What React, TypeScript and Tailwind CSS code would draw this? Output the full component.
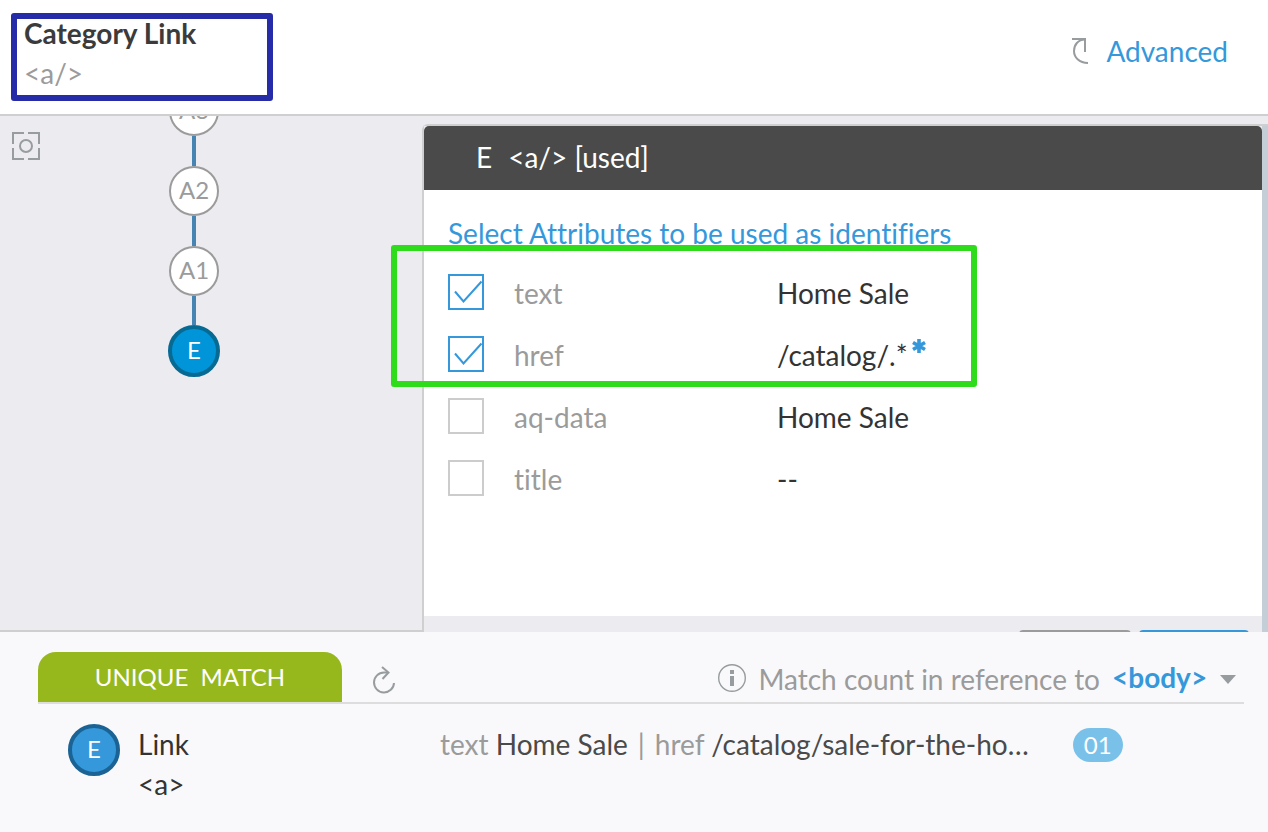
import { useState } from 'react';
import { clsx } from 'clsx';

interface Attribute {
  name: string;
  value: string;
  used: boolean;
  wildcard?: boolean;
}

const initialAttributes: Attribute[] = [
  { name: 'text', value: 'Home Sale', used: true },
  { name: 'href', value: '/catalog/.*', used: true, wildcard: true },
  { name: 'aq-data', value: 'Home Sale', used: false },
  { name: 'title', value: '--', used: false },
];

const ancestors = ['A3', 'A2', 'A1'];

function ElementHeader() {
  return (
    <header className="flex shrink-0 items-start justify-between border-b-2 border-[#cfcfcf] bg-white py-[13px] pr-10 pl-[11px]">
      <div className="w-[262px] rounded-[3px] border-6 border-[#262ca8] pb-2 pl-[7px]">
        <h1 className="leading-7 font-bold text-[#3b3b3b]">Category Link</h1>
        <p className="mt-3 leading-7 text-[#9b9b9b]">&lt;a/&gt;</p>
      </div>
      <button type="button" className="mt-[18px] flex gap-4 leading-10 text-[#3498db]">
        <svg className="mt-1.5 h-7 w-[18px] text-[#979c9f]" viewBox="0 0 18 28" fill="none" stroke="currentColor" strokeWidth="2">
          <path d="M0 2h14M13 1v14" />
          <path d="M13 2.5C6 2.5 2 8 2 14s5 12 14 12" />
        </svg>
        Advanced
      </button>
    </header>
  );
}

function AncestorTree() {
  return (
    <aside className="flex w-[422px] shrink-0 items-start overflow-hidden border-b-2 border-[#cfcfcf] pl-3">
      <button type="button" aria-label="Center on element" className="mt-4 text-[#979c9f]">
        <svg className="size-7" viewBox="0 0 28 28" fill="none" stroke="currentColor" strokeWidth="2">
          <path d="M12 1H1v11M16 1h11v11M12 27H1V16M16 27h11V16" />
          <circle cx="14" cy="14" r="6" />
        </svg>
      </button>
      <div className="-mt-[30px] ml-32 flex flex-col items-center text-2xl">
        {ancestors.map((label, index) => (
          <div key={label} className="flex flex-col items-center">
            <button
              type="button"
              className="size-[50px] rounded-full border-2 border-[#9b9b9b] bg-white pb-0.5 text-[#9b9b9b]"
            >
              {label}
            </button>
            <span className={clsx('w-1 bg-[#4684b4]', index === ancestors.length - 1 ? 'h-[29px]' : 'h-[30px]')} />
          </div>
        ))}
        <button type="button" className="size-[52px] rounded-full border-4 border-[#066a93] bg-[#0095d9] pb-0.5 text-white">
          E
        </button>
      </div>
    </aside>
  );
}

function AttributePanel() {
  const [attributes, setAttributes] = useState(initialAttributes);

  const toggle = (name: string) =>
    setAttributes((items) => items.map((item) => (item.name === name ? { ...item, used: !item.used } : item)));

  return (
    <section className="mt-2 flex min-w-0 flex-1 flex-col rounded-tl-md border-t-2 border-l-2 border-[#cfcfcf]">
      <div className="flex min-h-0 flex-1 bg-[#c3ced6]">
        <div className="flex min-w-0 flex-1 flex-col bg-white">
          <div className="bg-[#ecebf0]">
            <h2 className="flex gap-4 rounded-t-[5px] bg-[#4a4a4a] pb-0.5 pl-[52px] leading-[62px] text-white">
              <span>E</span>
              <span>&lt;a/&gt; [used]</span>
            </h2>
          </div>
          <fieldset className="relative flex-1 pt-6 pl-6">
            <legend className="float-left w-full leading-[38px] text-[#3498db]">
              Select Attributes to be used as identifiers
            </legend>
            <div className="clear-both pt-[9px]">
              {attributes.map((item) => (
                <label key={item.name} className="flex h-[62px] items-center">
                  <input
                    type="checkbox"
                    checked={item.used}
                    onChange={() => toggle(item.name)}
                    className="peer size-9 shrink-0 appearance-none border-2 border-[#cccccc] checked:border-[#3498db]"
                  />
                  <svg
                    className="invisible -ml-9 size-9 shrink-0 text-[#3498db] peer-checked:visible"
                    viewBox="0 0 36 36"
                    fill="none"
                    stroke="currentColor"
                    strokeWidth="2"
                  >
                    <path d="M7 17.5l8.5 10 18-20" />
                  </svg>
                  <span className="mt-0.5 ml-[30px] w-[263px] shrink-0 text-[#9b9b9b]">{item.name}</span>
                  <span className="mt-0.5 text-[#333333]">{item.value}</span>
                  {item.wildcard && (
                    <svg className="mb-4 ml-1 size-[14px] text-[#3498db]" viewBox="0 0 14 14" stroke="currentColor" strokeWidth="3.6">
                      <path d="M7 0v14M1 3.5l12 7M13 3.5l-12 7" />
                    </svg>
                  )}
                </label>
              ))}
            </div>
            {/* highlight around the active identifiers */}
            <div className="pointer-events-none absolute top-[55px] -left-[33px] h-[142px] w-[586px] rounded-[3px] border-6 border-[#2fdc1b]" />
          </fieldset>
          <div className="flex h-4 shrink-0 justify-end gap-2 overflow-hidden bg-[#ecebf0] pt-3.5 pr-[13px]">
            <button type="button" aria-label="Cancel" className="h-10 w-28 rounded bg-[#9b9b9b]" />
            <button type="button" aria-label="Apply" className="h-10 w-[110px] rounded bg-[#3498db]" />
          </div>
        </div>
        <div className="w-1.5 shrink-0" />
      </div>
    </section>
  );
}

function MatchResults() {
  return (
    <section className="h-[200px] shrink-0 bg-[#f9f9fb] pt-5 pr-6 pl-[38px]">
      <div className="flex items-center justify-between border-b-2 border-[#dddddd]">
        <div className="flex items-center">
          <h2 className="w-[304px] rounded-t-[18px] bg-[#97b81c] text-center text-2xl leading-[50px] whitespace-pre text-white">
            {'UNIQUE  MATCH'}
          </h2>
          <button type="button" aria-label="Refresh matches" className="mt-1.5 ml-[30px] text-[#979c9f]">
            <svg className="h-7 w-6" viewBox="0 0 24 28" fill="none" stroke="currentColor" strokeWidth="2">
              <path d="M22 17a10 10 0 1 1-10-10.5h4" />
              <path d="M10 1l6.5 5.5-6 6.5" />
            </svg>
          </button>
        </div>
        <div className="flex items-center">
          <svg className="mt-0.5 size-7 text-[#979c9f]" viewBox="0 0 28 28" fill="none" stroke="currentColor">
            <circle cx="14" cy="14" r="13.3" strokeWidth="1.4" />
            <path d="M14 6v4M14 12v10" strokeWidth="4" />
          </svg>
          <label htmlFor="reference" className="mt-1 ml-3 text-[#9b9b9b]">
            Match count in reference to
          </label>
          <select id="reference" className="ml-3 appearance-none font-bold text-[#3498db]">
            <option>&lt;body&gt;</option>
          </select>
          <svg className="mt-1 mr-2 ml-3 h-[9px] w-4 text-[#979c9f]" viewBox="0 0 16 9" fill="currentColor">
            <path d="M0 0h16L8 9z" />
          </svg>
        </div>
      </div>
      <div className="flex items-start pt-5 pl-[30px] leading-10">
        <span className="flex size-[52px] shrink-0 items-center justify-center rounded-full border-4 border-[#1b6394] bg-[#3498db] pb-0.5 text-2xl text-white">
          E
        </span>
        <p className="ml-[18px] w-[302px] shrink-0 text-[#333333]">
          Link
          <br />
          &lt;a&gt;
        </p>
        <p className="truncate text-[#4a4a4a]">
          <span className="text-[#9b9b9b]">text</span> Home Sale
          <span className="mx-2.5 text-[#9b9b9b]">|</span>
          <span className="text-[#9b9b9b]">href</span> /catalog/sale-for-the-ho…
        </p>
        <span className="mt-1 ml-11 w-[50px] shrink-0 rounded-full bg-[#7ac1ea] text-center text-2xl leading-[34px] text-white">01</span>
      </div>
    </section>
  );
}

export default function App() {
  return (
    <div className="flex h-screen flex-col overflow-hidden bg-[#ecebf0] font-['Lato',sans-serif] text-[28px] [font-variant-ligatures:no-common-ligatures]">
      <ElementHeader />
      <main className="flex min-h-0 flex-1 overflow-hidden">
        <AncestorTree />
        <AttributePanel />
      </main>
      <MatchResults />
    </div>
  );
}
